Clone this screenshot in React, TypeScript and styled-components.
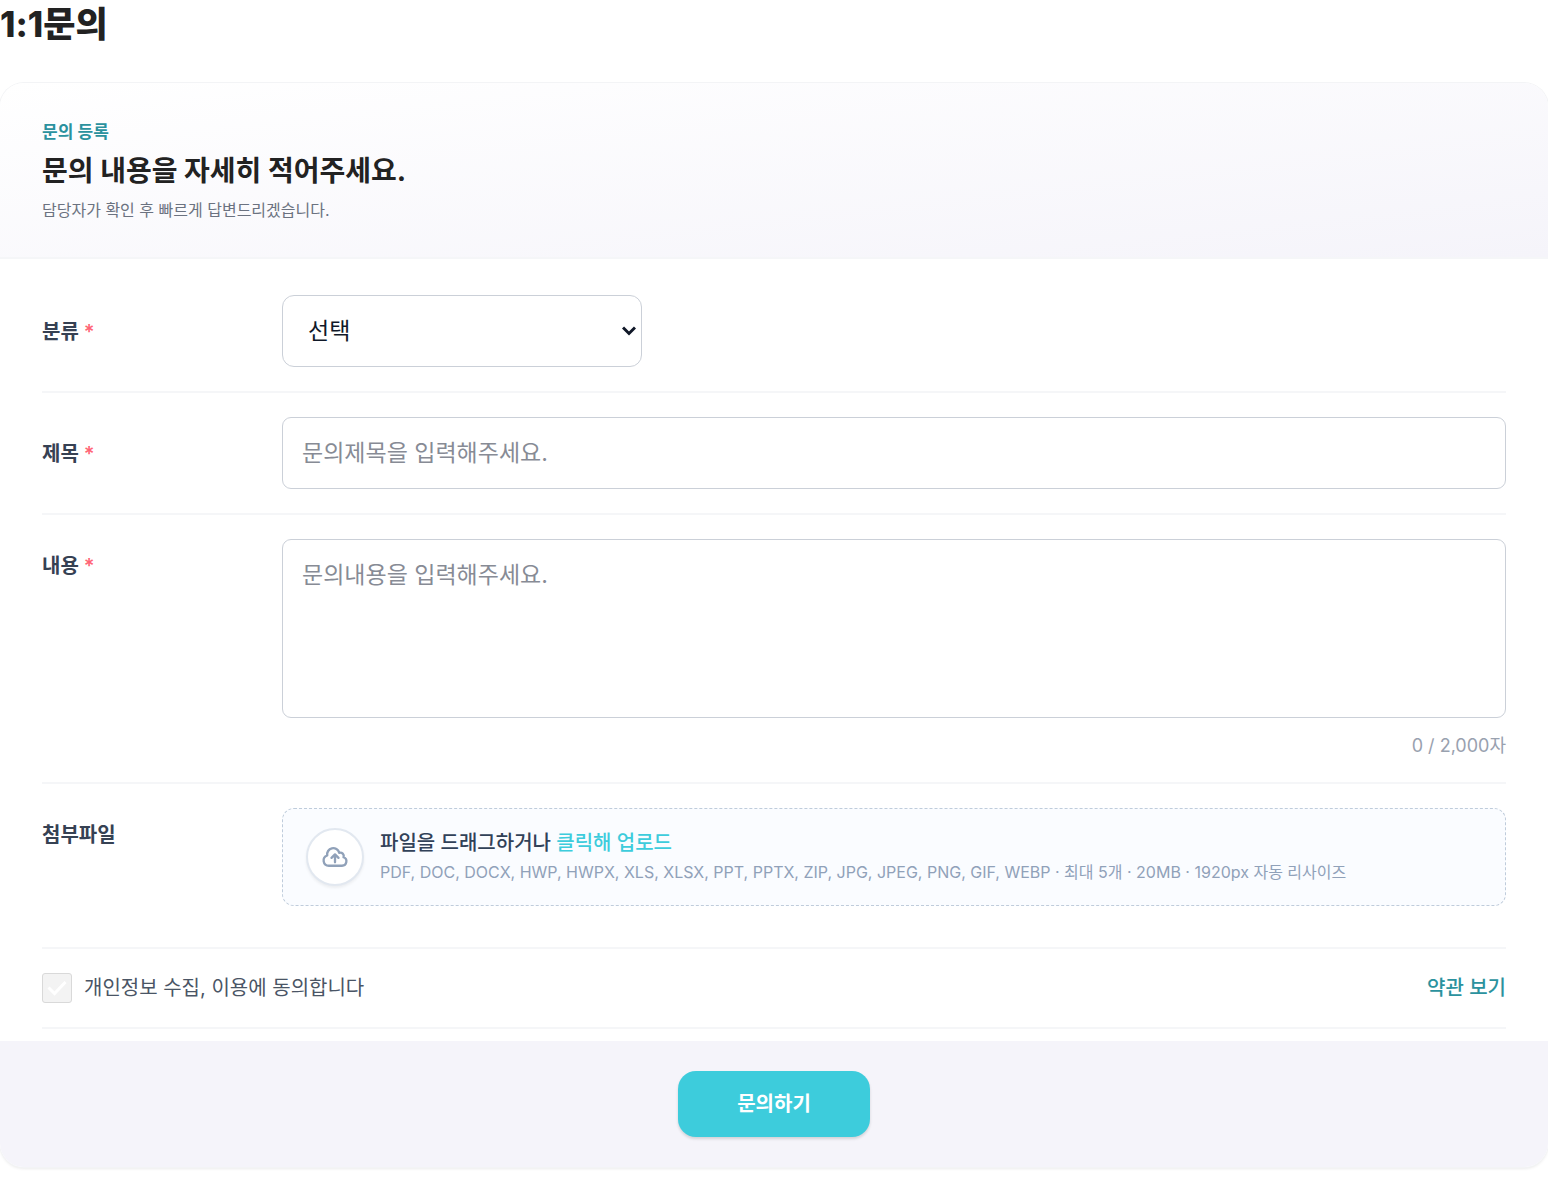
import React, { useState } from "react";
import styled, { createGlobalStyle } from "styled-components";

const MAX_LENGTH = 2000;

const GlobalStyle = createGlobalStyle`
  *, *::before, *::after { box-sizing: border-box; }
  body {
    margin: 0;
    background: #fff;
    color: #222;
    font-family: Inter, "Noto Sans CJK KR", sans-serif;
    font-size: 20px;
    line-height: 30px;
  }
  button, input, select, textarea { font: inherit; }
`;

const PageTitle = styled.h1`
  margin: 0 0 35px;
  font-size: 35px;
  line-height: 48px;
  font-weight: 800;
`;

const Card = styled.form`
  margin: 0 0 18px;
  overflow: hidden;
  border-radius: 24px;
  background: #fff;
  box-shadow: 0 0 0 1px #f3f4f6, 0 2px 3px rgba(0, 0, 0, 0.08);
`;

const CardHeader = styled.header`
  padding: 37px 42px 35px;
  border-bottom: 2px solid #f5f6f8;
  background: linear-gradient(to bottom right, #fff, #f5f4fa);
`;

const Eyebrow = styled.p`
  margin: 0;
  font-size: 17px;
  line-height: 24px;
  font-weight: 600;
  color: #2b929e;
`;

const Heading = styled.h2`
  margin: 6px 0;
  font-size: 28px;
  line-height: 42px;
  font-weight: 700;
`;

const Lead = styled.p`
  margin: 0;
  font-size: 16px;
  line-height: 24px;
  color: #6b7280;
`;

const CardBody = styled.div`
  padding: 12px 42px;
`;

const Row = styled.div<{ $top?: boolean; $tall?: boolean }>`
  display: grid;
  grid-template-columns: 216px minmax(0, 1fr);
  column-gap: 24px;
  align-items: ${(p) => (p.$top ? "start" : "center")};
  padding: 24px 0 ${(p) => (p.$tall ? 41 : 24)}px;
  border-bottom: 2px solid #f5f6f8;
`;

const Label = styled.label<{ $top?: boolean }>`
  padding-top: ${(p) => (p.$top ? 12 : 2)}px;
  font-weight: 600;
  color: #364153;
`;

const Required = styled.span`
  margin-left: 5px;
  color: #ff6475;
`;

const SelectBox = styled.div`
  display: grid;
  align-items: center;
  max-width: 360px;

  > * { grid-area: 1 / 1; }
  > svg {
    justify-self: end;
    margin-right: 6px;
    pointer-events: none;
  }
`;

const fieldFrame = `
  display: block;
  width: 100%;
  border: 1px solid #cbd0d8;
  outline: none;
  background: #fff;
  font-size: 23px;
  color: #101828;
  &::placeholder { color: #878b95; opacity: 1; }
  &:focus { border-color: #3dccdc; }
`;

const Select = styled.select`
  ${fieldFrame}
  height: 72px;
  padding: 0 25px;
  border-radius: 12px;
  appearance: none;
`;

const TextInput = styled.input`
  ${fieldFrame}
  height: 72px;
  padding: 0 19px;
  border-radius: 9px;
`;

const TextArea = styled.textarea`
  ${fieldFrame}
  height: 179px;
  padding: 17px 19px;
  border-radius: 9px;
  line-height: 36px;
  resize: none;
`;

const Counter = styled.p`
  margin: 16px 0 0;
  font-size: 18px;
  line-height: 24px;
  text-align: right;
  color: #99a1af;
`;

const HiddenFile = styled.input`
  position: absolute;
  width: 1px;
  height: 1px;
  opacity: 0;
`;

const DropZone = styled.label`
  display: flex;
  align-items: center;
  gap: 16px;
  padding: 19px 23px;
  border: 1px dashed #bfccdb;
  border-radius: 12px;
  background: #fafcff;
  cursor: pointer;
`;

const UploadBadge = styled.span`
  display: grid;
  place-items: center;
  flex: none;
  width: 58px;
  height: 58px;
  border: 2px solid #e2e8f0;
  border-radius: 50%;
  background: #fff;
  color: #90a1b9;
  box-shadow: 0 2px 3px rgba(0, 0, 0, 0.06);
`;

const DropText = styled.span`
  display: flex;
  flex-direction: column;
  min-width: 0;
`;

const DropTitle = styled.span`
  font-weight: 500;
  color: #314158;
`;

const Accent = styled.span`
  color: #3dccdc;
`;

const DropHint = styled.span`
  font-size: 16px;
  line-height: 28px;
  color: #90a1b9;
`;

const ConsentRow = styled.div`
  display: flex;
  align-items: center;
  justify-content: space-between;
  padding: 24px 0;
  border-bottom: 2px solid #f5f6f8;
`;

const ConsentLabel = styled.label`
  display: flex;
  align-items: center;
  gap: 12px;
  color: #4a5565;
`;

const CheckBoxFrame = styled.span`
  display: grid;
  place-items: center;

  > * { grid-area: 1 / 1; }
  > svg { pointer-events: none; }
`;

const CheckBox = styled.input`
  appearance: none;
  width: 30px;
  height: 30px;
  margin: 0;
  border: 1px solid #d9d9d9;
  border-radius: 3px;
  background: #f3f3f3;
  &:checked {
    border-color: #3dccdc;
    background: #3dccdc;
  }
`;

const TermsLink = styled.a`
  font-weight: 500;
  color: #2b929e;
  text-decoration: none;
`;

const CardFooter = styled.footer`
  display: flex;
  justify-content: center;
  padding: 30px 42px;
  background: #f5f4fa;
`;

const SubmitButton = styled.button`
  padding: 18px 59px;
  border: 0;
  border-radius: 18px;
  background: #3dccdc;
  color: #fff;
  font-weight: 600;
  box-shadow: 0 2px 3px rgba(0, 0, 0, 0.14);
  cursor: pointer;
`;

export default function App() {
  const [content, setContent] = useState("");

  return (
    <>
      <GlobalStyle />
      <main>
        <PageTitle>1:1문의</PageTitle>
        <Card onSubmit={(e) => e.preventDefault()}>
          <CardHeader>
            <Eyebrow>문의 등록</Eyebrow>
            <Heading>문의 내용을 자세히 적어주세요.</Heading>
            <Lead>담당자가 확인 후 빠르게 답변드리겠습니다.</Lead>
          </CardHeader>

          <CardBody>
            <Row>
              <Label htmlFor="category">
                분류<Required>*</Required>
              </Label>
              <SelectBox>
                <Select id="category" defaultValue="">
                  <option value="">선택</option>
                </Select>
                <svg width="14" height="10" viewBox="0 0 14 10" fill="none" stroke="#101828" strokeWidth="3" aria-hidden="true">
                  <path d="M1 1.5 7 7.5 13 1.5" />
                </svg>
              </SelectBox>
            </Row>

            <Row>
              <Label htmlFor="subject">
                제목<Required>*</Required>
              </Label>
              <TextInput id="subject" type="text" placeholder="문의제목을 입력해주세요." />
            </Row>

            <Row $top>
              <Label htmlFor="content" $top>
                내용<Required>*</Required>
              </Label>
              <div>
                <TextArea
                  id="content"
                  placeholder="문의내용을 입력해주세요."
                  maxLength={MAX_LENGTH}
                  value={content}
                  onChange={(e) => setContent(e.target.value)}
                />
                <Counter>{`${content.length} / ${MAX_LENGTH.toLocaleString("en-US")}자`}</Counter>
              </div>
            </Row>

            <Row $top $tall>
              <Label htmlFor="files" $top>
                첨부파일
              </Label>
              <DropZone>
                <HiddenFile id="files" type="file" multiple />
                <UploadBadge>
                  <svg width="28" height="28" viewBox="0 0 24 24" fill="none" stroke="currentColor" strokeWidth="2" strokeLinecap="round" strokeLinejoin="round" aria-hidden="true">
                    <path d="M12 16.5V9.75m0 0 3 3m-3-3-3 3M6.75 19.5a4.5 4.5 0 0 1-1.41-8.775 5.25 5.25 0 0 1 10.233-2.33 3 3 0 0 1 3.758 3.848A3.752 3.752 0 0 1 18 19.5H6.75Z" />
                  </svg>
                </UploadBadge>
                <DropText>
                  <DropTitle>
                    파일을 드래그하거나 <Accent>클릭해 업로드</Accent>
                  </DropTitle>
                  <DropHint>
                    PDF, DOC, DOCX, HWP, HWPX, XLS, XLSX, PPT, PPTX, ZIP, JPG, JPEG, PNG, GIF, WEBP · 최대 5개 · 20MB · 1920px 자동 리사이즈
                  </DropHint>
                </DropText>
              </DropZone>
            </Row>

            <ConsentRow>
              <ConsentLabel>
                <CheckBoxFrame>
                  <CheckBox type="checkbox" />
                  <svg width="20" height="16" viewBox="0 0 20 16" fill="none" stroke="#fff" strokeWidth="3" aria-hidden="true">
                    <path d="M1.5 7.5 7.5 13.5 18.5 2" />
                  </svg>
                </CheckBoxFrame>
                개인정보 수집, 이용에 동의합니다
              </ConsentLabel>
              <TermsLink href="#terms">약관 보기</TermsLink>
            </ConsentRow>
          </CardBody>

          <CardFooter>
            <SubmitButton type="submit">문의하기</SubmitButton>
          </CardFooter>
        </Card>
      </main>
    </>
  );
}
